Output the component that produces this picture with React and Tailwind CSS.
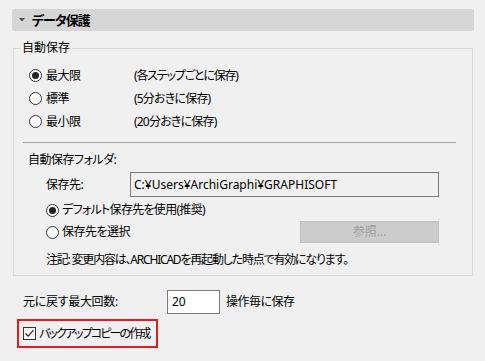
import React from "react";

function Radio({ checked }) {
    return (
        <span className="w-[13px] h-[13px] rounded-full border border-[#333333] bg-white flex items-center justify-center shrink-0">
            {checked && <span className="w-[7px] h-[7px] rounded-full bg-[#222222]" />}
        </span>
    );
}

export default function App() {
    return (
        <div className="w-[485px] h-[361px] bg-[#f0f0f0] pt-[9px] pl-[12px] text-[12px] leading-[16px] text-black font-['Noto_Sans','Noto_Sans_CJK_JP',sans-serif] [font-feature-settings:'palt'] tracking-[-0.5px] whitespace-nowrap overflow-hidden">
            {/* section header */}
            <div className="w-[462px] h-[22px] bg-[#d6d6d6] rounded-[2px] flex items-center pl-[7px]">
                <svg width="6" height="4" viewBox="0 0 6 4" className="shrink-0">
                    <path d="M0 0 L6 0 L3 3.5 Z" fill="#505050" />
                </svg>
                <span className="ml-[7px] text-[13px] font-bold tracking-[-1px]">データ保護</span>
            </div>

            {/* auto save group */}
            <div className="mt-[17px] ml-[1px] w-[460px] h-[228px] border border-[#d8d8d8] flex flex-col">
                <span className="-mt-[9px] ml-[6px] px-[2px] bg-[#f0f0f0] self-start tracking-normal">自動保存</span>

                <div className="mt-[8px] flex flex-col">
                    <div className="h-[23px] flex items-center pl-[15px]">
                        <Radio checked />
                        <span className="ml-[4px] w-[88px]">最大限</span>
                        <span className="tracking-[-1.2px]">(各ステップごとに保存)</span>
                    </div>
                    <div className="h-[23px] flex items-center pl-[15px]">
                        <Radio />
                        <span className="ml-[4px] w-[88px]">標準</span>
                        <span className="tracking-[-0.8px]">(5分おきに保存)</span>
                    </div>
                    <div className="h-[23px] flex items-center pl-[15px]">
                        <Radio />
                        <span className="ml-[4px] w-[88px]">最小限</span>
                        <span className="tracking-[-0.8px]">(20分おきに保存)</span>
                    </div>
                </div>

                <div className="mt-[9px] ml-[9px] w-[433px] h-px bg-[#a0a0a0]" />

                <span className="mt-[9px] ml-[14px]">自動保存フォルダ:</span>

                <div className="mt-[4px] pl-[32px] flex items-center">
                    <span className="w-[84px]">保存先:</span>
                    <div className="w-[309px] h-[25px] border border-[#7a7a7a] bg-[#f0f0f0] flex items-center pl-[3px] tracking-normal">
                        C:¥Users¥ArchiGraphi¥GRAPHISOFT
                    </div>
                </div>

                <div className="mt-[2px] h-[22px] pl-[32px] flex items-center">
                    <Radio checked />
                    <span className="ml-[3px] tracking-[-0.7px]">デフォルト保存先を使用(推奨)</span>
                </div>
                <div className="h-[22px] pl-[32px] flex items-center">
                    <Radio />
                    <span className="ml-[3px]">保存先を選択</span>
                    <button className="ml-auto mr-[33px] w-[139px] h-[22px] bg-[#cccccc] border border-[#bfbfbf] text-[#a0a0a0] flex items-center justify-center tracking-normal">
                        参照...
                    </button>
                </div>

                <span className="mt-[9px] ml-[32px] tracking-[-1.2px]">注記: 変更内容は、ARCHICADを再起動した時点で有効になります。</span>
            </div>

            {/* undo count */}
            <div className="mt-[14px] ml-[11px] flex items-center">
                <span className="w-[144px] tracking-[-0.3px]">元に戻す最大回数:</span>
                <div className="w-[53px] h-[24px] border border-[#7a7a7a] bg-white flex items-center pl-[4px] tracking-normal">20</div>
                <span className="ml-[6px]">操作毎に保存</span>
            </div>

            {/* backup copy */}
            <div className="mt-[5px] ml-[5px] w-[141px] h-[29px] border-2 border-[#e8191f] flex items-center pl-[4px]">
                <span className="w-[13px] h-[13px] border border-[#333333] bg-white flex items-center justify-center shrink-0">
                    <svg width="11" height="11" viewBox="0 0 11 11">
                        <path d="M1.5 5.5 L4.2 8.2 L9.5 2.2" fill="none" stroke="#222222" strokeWidth="1.2" />
                    </svg>
                </span>
                <span className="ml-[3px] tracking-[-1.9px]">バックアップコピーの作成</span>
            </div>
        </div>
    );
}
